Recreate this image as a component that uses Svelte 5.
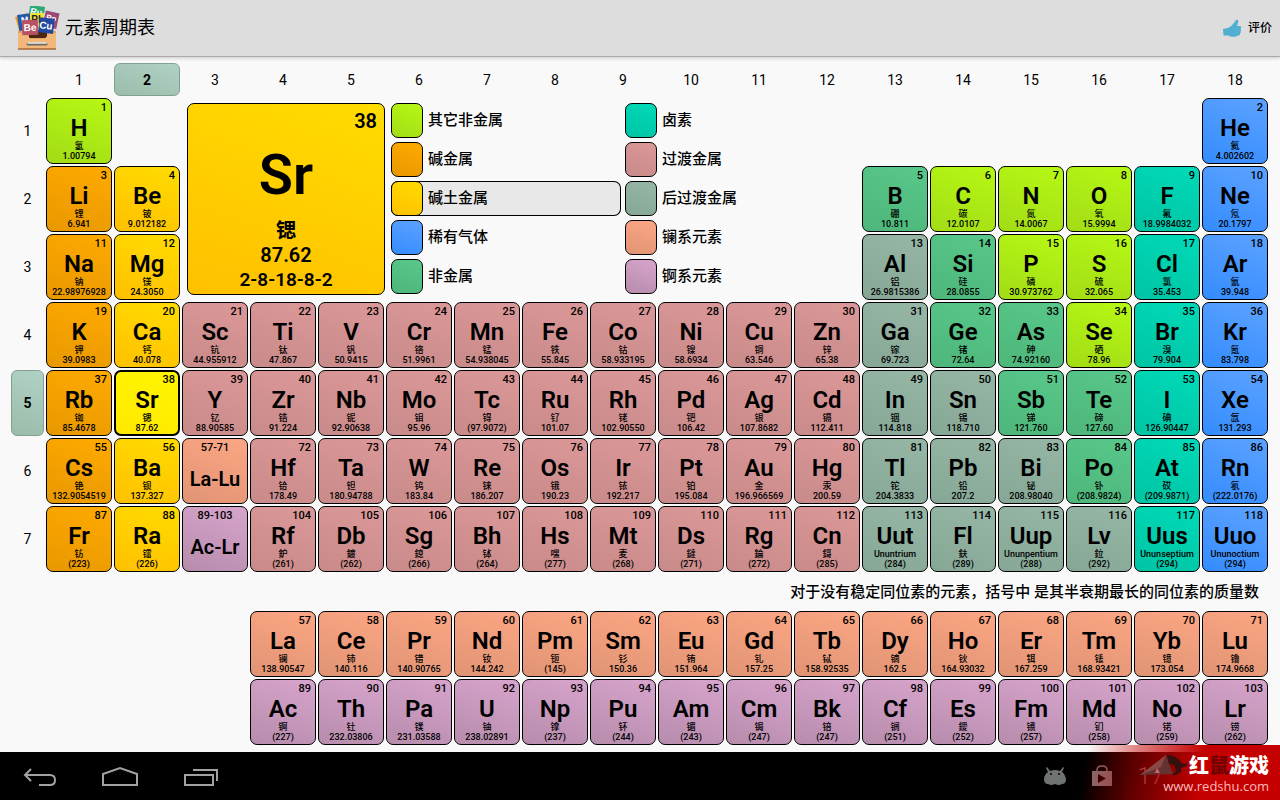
<script lang="ts">
	type Cell = { number: string; symbol: string; name: string; mass: string; kind: string; col: number; row: number; range?: boolean };

	// first number, start column, period row, then "symbol name mass kind" for each element in order
	const runs: [number, number, number, string][] = [
		[1, 1, 1, 'H 氢 1.00794 other'],
		[2, 18, 1, 'He 氦 4.002602 noble'],
		[3, 1, 2, 'Li 锂 6.941 alkali|Be 铍 9.012182 earth'],
		[5, 13, 2, 'B 硼 10.811 nonmetal|C 碳 12.0107 other|N 氮 14.0067 other|O 氧 15.9994 other|F 氟 18.9984032 halogen|Ne 氖 20.1797 noble'],
		[11, 1, 3, 'Na 钠 22.98976928 alkali|Mg 镁 24.3050 earth'],
		[13, 13, 3, 'Al 铝 26.9815386 post|Si 硅 28.0855 nonmetal|P 磷 30.973762 other|S 硫 32.065 other|Cl 氯 35.453 halogen|Ar 氩 39.948 noble'],
		[19, 1, 4, 'K 钾 39.0983 alkali|Ca 钙 40.078 earth|Sc 钪 44.955912 trans|Ti 钛 47.867 trans|V 钒 50.9415 trans|Cr 铬 51.9961 trans|Mn 锰 54.938045 trans|Fe 铁 55.845 trans|Co 钴 58.933195 trans|Ni 镍 58.6934 trans|Cu 铜 63.546 trans|Zn 锌 65.38 trans|Ga 镓 69.723 post|Ge 锗 72.64 nonmetal|As 砷 74.92160 nonmetal|Se 硒 78.96 other|Br 溴 79.904 halogen|Kr 氪 83.798 noble'],
		[37, 1, 5, 'Rb 铷 85.4678 alkali|Sr 锶 87.62 earth|Y 钇 88.90585 trans|Zr 锆 91.224 trans|Nb 铌 92.90638 trans|Mo 钼 95.96 trans|Tc 锝 (97.9072) trans|Ru 钌 101.07 trans|Rh 铑 102.90550 trans|Pd 钯 106.42 trans|Ag 银 107.8682 trans|Cd 镉 112.411 trans|In 铟 114.818 post|Sn 锡 118.710 post|Sb 锑 121.760 nonmetal|Te 碲 127.60 nonmetal|I 碘 126.90447 halogen|Xe 氙 131.293 noble'],
		[55, 1, 6, 'Cs 铯 132.9054519 alkali|Ba 钡 137.327 earth'],
		[72, 4, 6, 'Hf 铪 178.49 trans|Ta 钽 180.94788 trans|W 钨 183.84 trans|Re 铼 186.207 trans|Os 锇 190.23 trans|Ir 铱 192.217 trans|Pt 铂 195.084 trans|Au 金 196.966569 trans|Hg 汞 200.59 trans|Tl 铊 204.3833 post|Pb 铅 207.2 post|Bi 铋 208.98040 post|Po 钋 (208.9824) nonmetal|At 砹 (209.9871) halogen|Rn 氡 (222.0176) noble'],
		[87, 1, 7, 'Fr 钫 (223) alkali|Ra 镭 (226) earth'],
		[104, 4, 7, 'Rf 鈩 (261) trans|Db 鍍 (262) trans|Sg 鎴 (266) trans|Bh 钵 (264) trans|Hs 嘿 (277) trans|Mt 麦 (268) trans|Ds 鐽 (271) trans|Rg 錀 (272) trans|Cn 鎶 (285) trans|Uut Ununtrium (284) post|Fl 鈇 (289) post|Uup Ununpentium (288) post|Lv 鉝 (292) post|Uus Ununseptium (294) halogen|Uuo Ununoctium (294) noble'],
		[57, 4, 9, 'La 镧 138.90547 lanth|Ce 铈 140.116 lanth|Pr 镨 140.90765 lanth|Nd 钕 144.242 lanth|Pm 钷 (145) lanth|Sm 钐 150.36 lanth|Eu 铕 151.964 lanth|Gd 钆 157.25 lanth|Tb 铽 158.92535 lanth|Dy 镝 162.5 lanth|Ho 钬 164.93032 lanth|Er 铒 167.259 lanth|Tm 铥 168.93421 lanth|Yb 镱 173.054 lanth|Lu 镥 174.9668 lanth'],
		[89, 4, 10, 'Ac 锕 (227) actin|Th 钍 232.03806 actin|Pa 镤 231.03588 actin|U 铀 238.02891 actin|Np 镎 (237) actin|Pu 钚 (244) actin|Am 镅 (243) actin|Cm 锔 (247) actin|Bk 锫 (247) actin|Cf 锎 (251) actin|Es 鑀 (252) actin|Fm 镄 (257) actin|Md 钔 (258) actin|No 锘 (259) actin|Lr 铹 (262) actin'],
	];

	const cells: Cell[] = runs.flatMap(([first, col, row, text]) =>
		text.split('|').map((item, i) => {
			const [symbol, name, mass, kind] = item.split(' ');
			return { number: String(first + i), symbol, name, mass, kind, col: col + i, row };
		})
	);
	cells.push({ number: '57-71', symbol: 'La-Lu', name: '', mass: '', kind: 'lanth', col: 3, row: 6, range: true });
	cells.push({ number: '89-103', symbol: 'Ac-Lr', name: '', mass: '', kind: 'actin', col: 3, row: 7, range: true });

	const legend = [
		['other', '其它非金属'],
		['alkali', '碱金属'],
		['earth', '碱土金属'],
		['noble', '稀有气体'],
		['nonmetal', '非金属'],
		['halogen', '卤素'],
		['trans', '过渡金属'],
		['post', '后过渡金属'],
		['lanth', '镧系元素'],
		['actin', '锕系元素'],
	];

	const groups = Array.from({ length: 18 }, (_, i) => i + 1);
	const periods = [1, 2, 3, 4, 5, 6, 7];
	const shells: Record<string, string> = { Sr: '2-8-18-8-2' };

	let selected = $state.raw(cells.find((c) => c.symbol === 'Sr')!);
</script>

<div class="app">
	<header>
		<svg class="logo" width="46" height="44" viewBox="0 0 46 44" aria-hidden="true">
			<g font-family="Liberation Sans, sans-serif" font-weight="700" fill="#fff" text-anchor="middle">
				<path d="M1 11l12-4 4 17-11 4z" fill="#f0a02c" />
				<g transform="rotate(8 23 8)"><rect x="15" y="0" width="15" height="15" fill="#2aa876" /><text x="22" y="9" font-size="9">Ru</text></g>
				<g transform="rotate(12 38 14)"><rect x="30" y="6" width="14" height="16" fill="#9b4a78" /><text x="37" y="15" font-size="8">Po</text></g>
				<g transform="rotate(-8 11 15)"><rect x="4" y="8" width="15" height="16" fill="#2458a8" /><text x="11" y="17" font-size="9">M</text></g>
				<g><rect x="16" y="7" width="14" height="16" fill="#eee43c" /><text x="22" y="17" font-size="10" fill="#222">Pl</text></g>
				<path d="M4 25h38v16H4z" fill="#e2a15f" />
				<path d="M15 24h18v8H15z" fill="#4a2815" />
				<path d="M4 27h9q1 6 6 6h9q5 0 6-6h8v16H4z" fill="#f3b879" />
				<g transform="rotate(-2 16 20)"><rect x="8" y="14" width="16" height="15" fill="#b95264" /><text x="16" y="25" font-size="10">Be</text></g>
				<g transform="rotate(7 32 19)"><rect x="25" y="12" width="15" height="15" fill="#2348a0" /><text x="32" y="23" font-size="10">Cu</text></g>
			</g>
			<path d="M4 43h38" stroke="#a86a35" stroke-width="1.5" />
			<path d="M14 38h18" stroke="#6d6964" stroke-width="3" stroke-linecap="round" />
			<path d="M14 37h18" stroke="#eee" stroke-width="1.6" stroke-linecap="round" />
		</svg>
		<h1>元素周期表</h1>
		<button class="rate">
			<svg width="20" height="19" viewBox="0 0 20 19" aria-hidden="true">
				<path d="M1 10l5-1c4-2 5-4 8-8 2-1 3 1 2 3l-1 3 3 0c1.500 0 1.500 2 .5 2.500 1 .5.800 2 0 2.500.8.800.3 2-.5 2.300.3 1-.3 2-1.500 2.200C13 18.500 8 18 6 16.500H1.500z" fill="#52afd1" />
			</svg>
			评价
		</button>
	</header>

	<main>
		{#each groups as g}
			<div class="axis" class:active={g === selected.col} style="grid-column: {g + 1}; grid-row: 1">{g}</div>
		{/each}
		{#each periods as p}
			<div class="axis" class:active={p === selected.row} style="grid-column: 1; grid-row: {p + 1}">{p}</div>
		{/each}

		{#each cells as c}
			<button
				class="cell {c.kind}"
				class:range={c.range}
				class:selected={c === selected}
				style="grid-column: {c.col + 1}; grid-row: {c.row + 1}"
				onclick={() => { if (!c.range) selected = c; }}
			>
				<span class="number">{c.number}</span>
				<span class="symbol">{c.symbol}</span>
				{#if !c.range}
				<span class="name">{c.name}</span>
				<span class="mass">{c.mass}</span>
				{/if}
			</button>
		{/each}

		<section class="overview">
			<div class="detail {selected.kind}">
				<span class="number">{selected.number}</span>
				<span class="symbol">{selected.symbol}</span>
				<span class="name">{selected.name}</span>
				<span class="mass">{selected.mass}</span>
				<span class="shells">{shells[selected.symbol] ?? ''}</span>
			</div>
			<ul class="legend">
				{#each legend as [kind, label]}
				<li class:current={kind === selected.kind}>
					<span class="swatch {kind}"></span>
					{label}
				</li>
				{/each}
			</ul>
		</section>

		<p class="note">对于没有稳定同位素的元素，括号中 是其半衰期最长的同位素的质量数</p>
	</main>

	<footer>
		<button aria-label="返回">
			<svg width="36" height="24" viewBox="0 0 36 24"><path d="M9 3L3 9l6 6M3 9h25q5 0 5 5t-5 5H17" /></svg>
		</button>
		<button aria-label="主页">
			<svg width="38" height="24" viewBox="0 0 38 24"><path d="M2 19V8l17-6 17 6v11z" /></svg>
		</button>
		<button aria-label="最近任务">
			<svg width="38" height="24" viewBox="0 0 38 24"><path d="M4 9h28v10H4zM12 4h24v11" /></svg>
		</button>
		<div class="status">
			<svg width="24" height="20" viewBox="0 0 24 20" fill="#6f7371">
				<path d="M4 1l3 4q5-2 10 0l3-4 1 1-2 4q3 2 4 7 0 5-4 5-3 2-7 0-4 2-7 0-4 0-4-5 0-4 4-7L3 2z" />
				<circle cx="8" cy="8" r="1" fill="#000" /><circle cx="16" cy="8" r="1" fill="#000" />
			</svg>
			<svg width="20" height="22" viewBox="0 0 20 22">
				<path d="M0 6h20v15H0z" fill="#85706f" />
				<path d="M5 9V5q0-4 5-4t5 4v4" fill="none" stroke="#85706f" stroke-width="1.500" />
				<path d="M6 9l8 4.500L6 18z" fill="#200" />
			</svg>
			<span class="clock">17</span>
		</div>
	</footer>

	<div class="watermark">
		<svg width="50" height="24" viewBox="0 0 50 24" aria-hidden="true">
			<path d="M1 21L27 1l7 19z" fill="#643331" />
			<path d="M1 21L27 1l-5 12z" fill="#894846" />
			<path d="M18 14l3 5h-5z" fill="#c66" />
			<path d="M28 1q10 0 14 8l4 1 3-2-2 4-5 2 0 4-5 3h-4l4-4-2-6-5-1z" fill="#35100f" />
		</svg>
		<div class="brand">
			<strong>红<em>鼠</em>游戏</strong>
			<span>www.redshu.com</span>
		</div>
	</div>
</div>

<style>
	:global(body) { margin: 0; background: #f9f9f9; }
	.app { position: relative; display: flex; flex-direction: column; min-height: 100vh; font-family: Roboto, "Noto Sans CJK SC", sans-serif; color: #000; }
	button { font: inherit; color: inherit; cursor: pointer; }

	header { display: flex; align-items: center; gap: 5px; box-sizing: border-box; height: 57px; padding: 0 8px 0 14px; background: #ddd; border-bottom: 1px solid #aaa; box-shadow: 0 1px 4px rgba(0,0,0,0.2); }
	h1 { flex: 1; margin: 0; font-size: 18px; line-height: 24px; font-weight: 400; }
	.rate { display: flex; align-items: center; gap: 6px; padding: 0; background: none; border: none; font-size: 12px; line-height: 18px; font-weight: 500; }

	main { display: grid; grid-template-columns: 33px repeat(18, minmax(0, 1fr)); grid-template-rows: 33px repeat(7, 66px) 35px repeat(2, 66px); gap: 2px; padding: 6px 12px 7px 11px; }
	.axis { display: flex; align-items: center; justify-content: center; border: 1px solid transparent; border-radius: 6px; font-size: 14px; }
	.axis.active { font-weight: 700; background: linear-gradient(20deg, #9bbcab, #b0d2c3); border-color: #82a092; }

	.cell { display: flex; flex-direction: column; align-items: center; min-width: 0; padding: 2px 4px; border: 1px solid #000; border-radius: 7px; font-weight: 500; text-align: center; white-space: nowrap; }
	.cell .number { align-self: flex-end; font-size: 11px; line-height: 14px; }
	.cell .symbol { font-size: 24px; line-height: 26px; font-weight: 600; }
	.cell .name, .cell .mass { font-size: 9px; line-height: 10px; }
	.cell.range .number { align-self: center; }
	.cell.range .symbol { font-size: 20px; line-height: 48px; }
	.cell.selected { padding: 1px 3px; border-width: 2px; background: linear-gradient(20deg, #ffe800, #fff600); }

	.overview { grid-column: 4 / 14; grid-row: 2 / 5; display: flex; gap: 6px; padding: 5px; }
	.detail { display: flex; flex-direction: column; align-items: center; box-sizing: border-box; width: 198px; height: 192px; padding: 7px; border: 1px solid #000; border-radius: 7px; font-weight: 600; }
	.detail .number { align-self: flex-end; font-size: 20px; line-height: 20px; }
	.detail .symbol { font-size: 56px; line-height: 88px; }
	.detail .name { font-size: 20px; line-height: 24px; }
	.detail .mass { font-size: 20px; line-height: 24px; }
	.detail .shells { font-size: 19px; line-height: 26px; }

	.legend { display: grid; grid-auto-flow: column; grid-template-rows: repeat(5, 35px); grid-auto-columns: 230px; gap: 4px; margin: 0; padding: 0; list-style: none; font-size: 15px; line-height: 34px; font-weight: 500; }
	.legend li { display: flex; gap: 5px; border-radius: 7px; }
	.legend li.current { background: #e8e8e8; box-shadow: inset 0 0 0 1px #000; }
	.swatch { box-sizing: border-box; width: 32px; height: 35px; border: 1px solid #000; border-radius: 7px; }

	.note { grid-column: 1 / -1; grid-row: 9; margin: 0; padding-right: 9px; font-size: 15px; line-height: 36px; font-weight: 500; text-align: right; }

	.other { background: linear-gradient(20deg, #a2dc16, #b7f814); }
	.alkali { background: linear-gradient(20deg, #e89800, #ffaa00); }
	.earth { background: linear-gradient(20deg, #ffc000, #ffdc00); }
	.noble { background: linear-gradient(20deg, #348cff, #5ca2ff); }
	.nonmetal { background: linear-gradient(20deg, #4eb67a, #58c88a); }
	.halogen { background: linear-gradient(20deg, #00c4a4, #00dab8); }
	.trans { background: linear-gradient(20deg, #c88a8a, #dc9898); }
	.post { background: linear-gradient(20deg, #86a696, #96b6a6); }
	.lanth { background: linear-gradient(20deg, #e09474, #fca684); }
	.actin { background: linear-gradient(20deg, #b68cac, #d8a4cc); }

	footer { display: flex; align-items: center; box-sizing: border-box; height: 48px; margin-top: auto; padding: 0 116px 0 0; background: #000; }
	footer button { display: flex; justify-content: center; width: 80px; padding: 4px 0 0; background: none; border: none; }
	footer button svg { fill: none; stroke: #a2a2a2; stroke-width: 2; }
	.status { display: flex; align-items: center; gap: 25px; margin-left: auto; }
	.clock { font-size: 24px; font-weight: 300; color: #888; }

	.watermark { position: absolute; right: 0; bottom: 0; display: flex; align-items: flex-start; justify-content: flex-end; box-sizing: border-box; width: 210px; height: 55px; padding: 9px 11px 0 0; background: linear-gradient(100deg, rgba(196,0,0,0) 8%, rgba(196,0,0,0.5) 32%, #c40000 62%); color: #fff; }
	.brand { display: flex; flex-direction: column; align-items: flex-end; margin-left: -26px; }
	.brand strong { font-size: 20px; line-height: 24px; font-weight: 900; }
	.brand em { font-style: normal; color: #710000; }
	.brand span { font-family: "Open Sans", sans-serif; font-size: 13px; line-height: 16px; color: #fbb; }
</style>
